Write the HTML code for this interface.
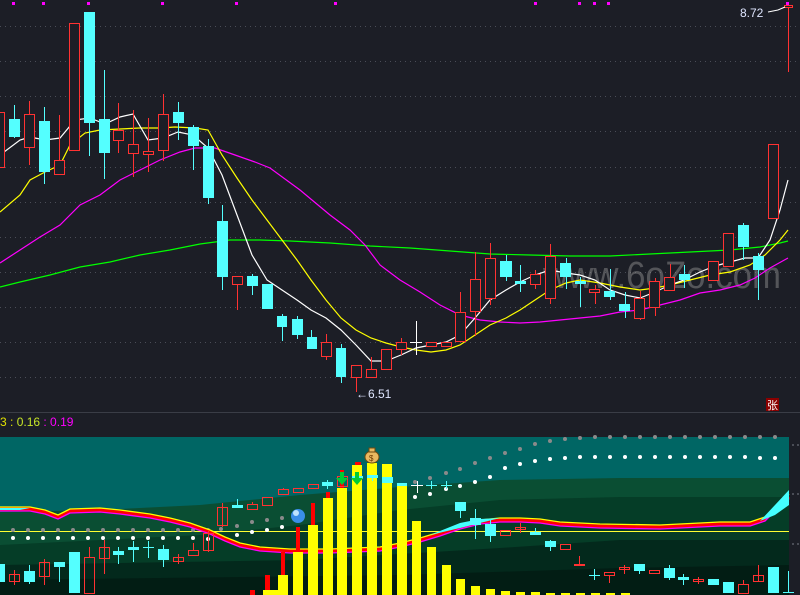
<!DOCTYPE html>
<html><head><meta charset="utf-8"><style>
html,body{margin:0;padding:0;background:#1c1e26;width:800px;height:595px;overflow:hidden}
svg{display:block}
text{font-family:"Liberation Sans","Noto Sans CJK SC",sans-serif}
</style></head><body>
<svg width="800" height="595" viewBox="0 0 800 595" xmlns="http://www.w3.org/2000/svg">
<rect width="800" height="595" fill="#1c1e26"/>
<!-- grid -->
<g stroke="#4a4d57" stroke-width="1" stroke-dasharray="1 4">
<line x1="0" y1="26.5" x2="800" y2="26.5"/><line x1="0" y1="61.5" x2="800" y2="61.5"/>
<line x1="0" y1="96.5" x2="800" y2="96.5"/><line x1="0" y1="131.5" x2="800" y2="131.5"/>
<line x1="0" y1="167.5" x2="800" y2="167.5"/><line x1="0" y1="202.5" x2="800" y2="202.5"/>
<line x1="0" y1="237.5" x2="800" y2="237.5"/><line x1="0" y1="272.5" x2="800" y2="272.5"/>
<line x1="0" y1="307.5" x2="800" y2="307.5"/><line x1="0" y1="342.5" x2="800" y2="342.5"/>
<line x1="0" y1="377.5" x2="800" y2="377.5"/>
</g>
<g fill="#ff00ff">
<rect x="12" y="2" width="3" height="3"/><rect x="42" y="2" width="3" height="3"/><rect x="87" y="2" width="3" height="3"/><rect x="161" y="2" width="3" height="3"/><rect x="235" y="2" width="3" height="3"/><rect x="334" y="2" width="3" height="3"/><rect x="534" y="2" width="3" height="3"/><rect x="578" y="2" width="3" height="3"/><rect x="593" y="2" width="3" height="3"/><rect x="607" y="2" width="3" height="3"/><rect x="786" y="2" width="3" height="3"/>
</g>
<!-- watermark -->
<text x="543" y="288" font-size="38" fill="#9a9a9a" fill-opacity="0.45" textLength="238" lengthAdjust="spacingAndGlyphs">www.6oZo.com</text>
<!-- MA lines -->
<g fill="none" stroke-width="1.2">
<polyline stroke="#00ff00" points="0,287 20,282 50,275 80,267 110,262 140,255 170,250 200,244 230,240 260,240 290,241 330,243 370,246 410,248 450,251 490,254 530,255 570,256 610,256 650,254 690,252 730,250 760,247 780,243 788,241"/>
<polyline stroke="#ff00ff" points="0,263 20,250 40,237 60,225 80,205 100,195 120,180 140,170 160,160 180,152 195,148 215,148 235,155 255,162 270,168 300,190 330,215 350,230 365,245 380,265 400,280 420,292 440,305 460,315 480,320 500,322 520,323 540,322 560,320 580,318 600,316 620,312 640,310 660,305 680,300 700,293 720,290 740,285 755,278 770,268 788,258"/>
<polyline stroke="#ffff00" points="0,212 20,195 30,180 45,172 60,165 70,145 85,133 100,130 120,129 140,128 160,128 175,127 195,128 208,130 222,155 237,178 252,200 267,220 282,240 297,260 311,280 326,300 341,318 356,330 371,338 386,343 401,347 416,350 431,352 446,350 460,345 475,335 490,325 506,318 520,310 535,300 550,290 566,283 580,280 600,283 620,287 640,290 655,288 670,285 690,280 710,275 730,272 750,265 765,255 780,240 788,230"/>
<polyline stroke="#ffffff" points="0,155 20,140 30,137 45,140 60,138 75,120 90,118 105,124 120,117 133,114 148,140 163,138 178,132 193,135 208,148 222,175 237,215 252,255 267,280 282,290 297,300 311,310 326,318 341,330 356,345 371,361 386,361 401,355 416,348 431,345 446,342 460,335 475,318 490,300 506,290 520,282 535,275 550,270 566,273 580,275 595,280 610,290 625,295 640,298 655,292 670,285 684,280 700,272 715,266 730,262 745,258 758,258 770,240 780,210 788,180"/>
</g>
<!-- upper candles -->
<g stroke="#ff3232" fill="#1c1e26" stroke-width="1">
<rect x="-2.5" y="112.5" width="7" height="55"/>
<line x1="29.5" y1="101" x2="29.5" y2="165"/><rect x="24.5" y="114.5" width="10" height="33"/>
<line x1="59.5" y1="115" x2="59.5" y2="174"/><rect x="54.5" y="160.5" width="10" height="14"/>
<rect x="69.5" y="23.5" width="10" height="127"/>
<line x1="118.5" y1="103" x2="118.5" y2="153"/><rect x="113.5" y="130.5" width="10" height="10"/>
<line x1="133.5" y1="110" x2="133.5" y2="177"/><rect x="128.5" y="144.5" width="10" height="9"/>
<line x1="148.5" y1="118" x2="148.5" y2="172"/><rect x="143.5" y="151.5" width="10" height="3"/>
<line x1="163.5" y1="94" x2="163.5" y2="161"/><rect x="158.5" y="114.5" width="10" height="36"/>
<line x1="237.5" y1="276" x2="237.5" y2="310"/><rect x="232.5" y="276.5" width="10" height="8"/>
<line x1="326.5" y1="334" x2="326.5" y2="360"/><rect x="321.5" y="342.5" width="10" height="14"/>
<line x1="356.5" y1="365" x2="356.5" y2="392"/><rect x="351.5" y="365.5" width="10" height="12"/>
<line x1="371.5" y1="357" x2="371.5" y2="370"/><rect x="366.5" y="369.5" width="10" height="8"/>
<rect x="381.5" y="349.5" width="10" height="20"/>
<line x1="401.5" y1="338" x2="401.5" y2="355"/><rect x="396.5" y="342.5" width="10" height="7"/>
<rect x="426.5" y="342.5" width="10" height="4"/><rect x="441.5" y="342.5" width="10" height="4"/>
<line x1="460.5" y1="292" x2="460.5" y2="341"/><rect x="455.5" y="312.5" width="10" height="29"/>
<line x1="475.5" y1="252" x2="475.5" y2="336"/><rect x="470.5" y="279.5" width="10" height="32"/>
<line x1="490.5" y1="243" x2="490.5" y2="305"/><rect x="485.5" y="258.5" width="10" height="40"/>
<line x1="535.5" y1="270" x2="535.5" y2="289"/><rect x="530.5" y="274.5" width="10" height="10"/>
<line x1="550.5" y1="244" x2="550.5" y2="304"/><rect x="545.5" y="256.5" width="10" height="42"/>
<line x1="595.5" y1="285" x2="595.5" y2="304"/><rect x="589.5" y="289.5" width="10" height="3"/>
<line x1="640.5" y1="291" x2="640.5" y2="320"/><rect x="634.5" y="298.5" width="10" height="20"/>
<line x1="655.5" y1="278" x2="655.5" y2="316"/><rect x="649.5" y="281.5" width="10" height="26"/>
<line x1="670.5" y1="264" x2="670.5" y2="291"/><rect x="664.5" y="277.5" width="10" height="13"/>
<rect x="708.5" y="261.5" width="10" height="19"/>
<rect x="723.5" y="233.5" width="10" height="33"/>
<rect x="768.5" y="144.5" width="10" height="74"/>
<line x1="788.5" y1="5" x2="788.5" y2="72"/><rect x="784.5" y="5.5" width="8" height="2"/>
</g>
<g fill="#54ffff" stroke="#54ffff" stroke-width="1">
<line x1="14.5" y1="105" x2="14.5" y2="138"/><rect x="9" y="119" width="11" height="18" stroke="none"/>
<line x1="44.5" y1="107" x2="44.5" y2="184"/><rect x="39" y="121" width="11" height="51" stroke="none"/>
<line x1="89.5" y1="12" x2="89.5" y2="156"/><rect x="84" y="12" width="11" height="111" stroke="none"/>
<line x1="104.5" y1="70" x2="104.5" y2="179"/><rect x="99" y="119" width="11" height="34" stroke="none"/>
<line x1="178.5" y1="102" x2="178.5" y2="140"/><rect x="173" y="112" width="11" height="11" stroke="none"/>
<line x1="193.5" y1="125" x2="193.5" y2="170"/><rect x="188" y="127" width="11" height="19" stroke="none"/>
<line x1="208.5" y1="139" x2="208.5" y2="204"/><rect x="203" y="146" width="11" height="52" stroke="none"/>
<line x1="222.5" y1="205" x2="222.5" y2="290"/><rect x="217" y="221" width="11" height="56" stroke="none"/>
<line x1="252.5" y1="274" x2="252.5" y2="295"/><rect x="247" y="276" width="11" height="10" stroke="none"/>
<rect x="262" y="284" width="11" height="25" stroke="none"/>
<line x1="282.5" y1="314" x2="282.5" y2="341"/><rect x="277" y="316" width="10" height="11" stroke="none"/>
<line x1="297.5" y1="316" x2="297.5" y2="339"/><rect x="292" y="319" width="11" height="16" stroke="none"/>
<line x1="311.5" y1="330" x2="311.5" y2="349"/><rect x="307" y="337" width="10" height="12" stroke="none"/>
<line x1="341.5" y1="344" x2="341.5" y2="383"/><rect x="336" y="348" width="10" height="29" stroke="none"/>
<line x1="506.5" y1="255" x2="506.5" y2="281"/><rect x="500" y="261" width="12" height="16" stroke="none"/>
<line x1="520.5" y1="265" x2="520.5" y2="292"/><rect x="515" y="281" width="11" height="3" stroke="none"/>
<line x1="566.5" y1="258" x2="566.5" y2="289"/><rect x="560" y="263" width="11" height="14" stroke="none"/>
<line x1="580.5" y1="277" x2="580.5" y2="307"/><rect x="575" y="281" width="11" height="3" stroke="none"/>
<line x1="610.5" y1="269" x2="610.5" y2="300"/><rect x="604" y="291" width="11" height="6" stroke="none"/>
<line x1="625.5" y1="292" x2="625.5" y2="318"/><rect x="619" y="304" width="11" height="7" stroke="none"/>
<line x1="684.5" y1="265" x2="684.5" y2="288"/><rect x="679" y="274" width="11" height="6" stroke="none"/>
<line x1="743.5" y1="223" x2="743.5" y2="260"/><rect x="738" y="225" width="11" height="22" stroke="none"/>
<line x1="758.5" y1="253" x2="758.5" y2="300"/><rect x="753" y="256" width="11" height="14" stroke="none"/>
</g>
<g stroke="#ffffff"><line x1="410" y1="342.5" x2="422" y2="342.5"/><line x1="416.5" y1="321" x2="416.5" y2="355"/></g>
<!-- labels -->
<text x="356" y="398" font-size="12" fill="#dfe6ff">←6.51</text>
<text x="740" y="17" font-size="12" fill="#dfe6ff">8.72</text>
<polyline points="768,12 778,10 785,7" fill="none" stroke="#fff" stroke-width="1"/>
<rect x="766" y="398" width="13" height="13" fill="#8b0000"/>
<text x="767" y="409" font-size="11" fill="#fff">张</text>
<line x1="0" y1="412.5" x2="800" y2="412.5" stroke="#3a3d46"/>
<text x="0" y="426" font-size="12"><tspan fill="#e0e000">3 : </tspan><tspan fill="#c8e628">0.16 </tspan><tspan fill="#ff00ff">: 0.19</tspan></text>
<!-- lower panel -->
<rect x="0" y="437" width="789" height="158" fill="#006664"/>
<polygon fill="#0a4e33" points="0,512 100,510 200,505 300,495 400,487 500,480 620,478 789,478 789,595 0,595"/>
<polygon fill="#053d27" points="0,545 200,535 300,525 400,510 500,500 620,497 789,497 789,595 0,595"/>
<polygon fill="#03291c" points="0,565 300,560 500,548 620,540 789,540 789,595 0,595"/>
<polygon fill="#021d14" points="0,580 400,575 620,568 789,565 789,595 0,595"/>
<rect x="789" y="437" width="11" height="158" fill="#1c1e26"/>
<g fill="#5a5d66"><circle cx="793" cy="445" r="1"/><circle cx="798" cy="445" r="1"/><circle cx="793" cy="494" r="1"/><circle cx="798" cy="494" r="1"/><circle cx="793" cy="544" r="1"/><circle cx="798" cy="544" r="1"/></g>
<line x1="0" y1="531.5" x2="789" y2="531.5" stroke="#ffff33" stroke-width="1"/>
<!-- dots -->
<g fill="#8a8a8a">
<circle cx="13" cy="530" r="2"/><circle cx="28" cy="530" r="2"/><circle cx="43" cy="530" r="2"/><circle cx="58" cy="530" r="2"/><circle cx="73" cy="530" r="2"/><circle cx="88" cy="530" r="2"/><circle cx="103" cy="530" r="2"/><circle cx="118" cy="530" r="2"/><circle cx="133" cy="530" r="2"/><circle cx="148" cy="530" r="2"/><circle cx="163" cy="530" r="2"/><circle cx="178" cy="530" r="2"/><circle cx="193" cy="530" r="2"/><circle cx="208" cy="530" r="2"/><circle cx="221" cy="529" r="2"/><circle cx="237" cy="526" r="2"/><circle cx="252" cy="522" r="2"/><circle cx="267" cy="520" r="2"/><circle cx="282" cy="518" r="2"/>
<circle cx="415" cy="482" r="2"/><circle cx="430" cy="478" r="2"/><circle cx="446" cy="473" r="2"/><circle cx="460" cy="469" r="2"/><circle cx="475" cy="463" r="2"/><circle cx="490" cy="458" r="2"/><circle cx="505" cy="453" r="2"/><circle cx="520" cy="449" r="2"/><circle cx="535" cy="444" r="2"/><circle cx="550" cy="441" r="2"/><circle cx="565" cy="439" r="2"/><circle cx="580" cy="438" r="2"/><circle cx="595" cy="437" r="2"/><circle cx="610" cy="437" r="2"/><circle cx="625" cy="437" r="2"/><circle cx="640" cy="437" r="2"/><circle cx="655" cy="437" r="2"/><circle cx="670" cy="437" r="2"/><circle cx="685" cy="437" r="2"/><circle cx="700" cy="437" r="2"/><circle cx="715" cy="437" r="2"/><circle cx="730" cy="437" r="2"/><circle cx="745" cy="437" r="2"/><circle cx="760" cy="437" r="2"/><circle cx="775" cy="437" r="2"/>
</g>
<g fill="#ffffff">
<circle cx="13" cy="538" r="2"/><circle cx="28" cy="538" r="2"/><circle cx="43" cy="538" r="2"/><circle cx="58" cy="538" r="2"/><circle cx="73" cy="538" r="2"/><circle cx="88" cy="538" r="2"/><circle cx="103" cy="538" r="2"/><circle cx="118" cy="538" r="2"/><circle cx="133" cy="538" r="2"/><circle cx="148" cy="538" r="2"/><circle cx="163" cy="538" r="2"/><circle cx="178" cy="538" r="2"/><circle cx="193" cy="538" r="2"/><circle cx="208" cy="539" r="2"/><circle cx="237" cy="535" r="2"/><circle cx="252" cy="532" r="2"/><circle cx="267" cy="530" r="2"/><circle cx="282" cy="527" r="2"/>
<circle cx="415" cy="497" r="2"/><circle cx="430" cy="494" r="2"/><circle cx="446" cy="489" r="2"/><circle cx="460" cy="486" r="2"/><circle cx="475" cy="482" r="2"/><circle cx="490" cy="477" r="2"/><circle cx="505" cy="468" r="2"/><circle cx="520" cy="464" r="2"/><circle cx="535" cy="461" r="2"/><circle cx="550" cy="459" r="2"/><circle cx="565" cy="458" r="2"/><circle cx="580" cy="457" r="2"/><circle cx="595" cy="457" r="2"/><circle cx="610" cy="457" r="2"/><circle cx="625" cy="457" r="2"/><circle cx="640" cy="457" r="2"/><circle cx="655" cy="457" r="2"/><circle cx="670" cy="457" r="2"/><circle cx="685" cy="457" r="2"/><circle cx="700" cy="457" r="2"/><circle cx="715" cy="457" r="2"/><circle cx="730" cy="457" r="2"/><circle cx="745" cy="457" r="2"/><circle cx="760" cy="458" r="2"/><circle cx="775" cy="458" r="2"/>
</g>
<!-- ribbon -->
<g fill="none" stroke-linejoin="round">
<polyline stroke="#ff0000" stroke-width="3" points="0,509 30,509 45,512 58,517 70,511 100,510 120,512 150,516 170,520 190,525 210,532 225,539 240,545 260,549 290,551 330,551 380,549 400,545 420,540 440,534 460,527 480,522 500,520 520,520 540,521 560,524 600,526 660,527 700,525 720,524 750,524 765,519 775,509 789,497"/>
<polyline stroke="#ffff00" stroke-width="1.3" points="0,507 30,507 45,510 58,515 70,509 100,508 120,510 150,514 170,518 190,523 210,530 225,537 240,543 260,547 290,549 330,549 380,547 400,543 420,538 440,532 460,525 480,520 500,518 520,518 540,519 560,522 600,524 660,525 700,523 720,522 750,522 765,517 775,507 789,494"/>
<polyline stroke="#ff00ff" stroke-width="1.3" points="0,511 30,511 45,514 58,519 70,513 100,512 120,514 150,518 170,522 190,527 210,534 225,541 240,547 260,551 290,553 330,553 380,551 400,547 420,542 440,536 460,529 480,524 500,522 520,522 540,523 560,526 600,528 660,529 700,527 720,526 750,526 765,521 775,511 789,499"/>
</g>
<polygon fill="#44ffff" points="430,535 460,523 480,519 500,518 480,523 460,528"/>
<polygon fill="#44ffff" points="0,508 30,508 20,510 0,510"/>
<polygon fill="#44ffff" points="760,521 775,505 789,490 789,505 775,515"/>
<!-- volume bars -->
<g fill="#ff0000">
<rect x="250" y="590" width="5" height="5"/><rect x="265" y="575" width="5" height="20"/><rect x="281" y="552" width="4" height="24"/><rect x="296" y="527" width="4" height="26"/><rect x="311" y="503" width="4" height="23"/><rect x="326" y="492" width="4" height="8"/><rect x="340" y="470" width="4" height="19"/><rect x="355" y="462" width="6" height="4"/>
</g>
<g fill="#ffff00">
<rect x="263" y="590" width="15" height="5"/><rect x="278" y="575" width="10" height="20"/><rect x="293" y="552" width="10" height="43"/><rect x="308" y="525" width="10" height="70"/><rect x="323" y="498" width="10" height="97"/><rect x="337" y="488" width="10" height="107"/><rect x="352" y="465" width="10" height="130"/><rect x="367" y="463" width="10" height="132"/><rect x="382" y="464" width="10" height="131"/><rect x="397" y="484" width="10" height="111"/><rect x="412" y="521" width="9" height="74"/><rect x="427" y="547" width="9" height="48"/><rect x="442" y="565" width="9" height="30"/><rect x="456" y="579" width="9" height="16"/><rect x="471" y="586" width="9" height="9"/><rect x="486" y="589" width="9" height="6"/><rect x="501" y="591" width="9" height="4"/><rect x="516" y="592" width="9" height="3"/><rect x="531" y="592" width="9" height="3"/><rect x="546" y="593" width="9" height="2"/><rect x="561" y="593" width="9" height="2"/><rect x="576" y="593" width="9" height="2"/><rect x="591" y="593" width="9" height="2"/><rect x="606" y="593" width="9" height="2"/><rect x="621" y="593" width="9" height="2"/>
</g>
<!-- lower candles red -->
<g stroke="#ff3232" fill="none">
<line x1="14.5" y1="570" x2="14.5" y2="585"/><rect x="9.5" y="574.5" width="10" height="7"/>
<line x1="44.5" y1="559" x2="44.5" y2="585"/><rect x="39.5" y="562.5" width="10" height="14"/>
<line x1="89.5" y1="547" x2="89.5" y2="557"/><rect x="84.5" y="557.5" width="10" height="36"/>
<line x1="104.5" y1="540" x2="104.5" y2="574"/><rect x="99.5" y="547.5" width="10" height="11"/>
<line x1="178.5" y1="554" x2="178.5" y2="564"/><rect x="173.5" y="557.5" width="10" height="4"/>
<line x1="193.5" y1="543" x2="193.5" y2="550"/><rect x="188.5" y="550.5" width="10" height="5"/>
<line x1="208.5" y1="531" x2="208.5" y2="552"/><rect x="203.5" y="533.5" width="10" height="17"/>
<line x1="222.5" y1="503" x2="222.5" y2="527"/><rect x="217.5" y="507.5" width="10" height="18"/>
<line x1="252.5" y1="502" x2="252.5" y2="505"/><rect x="247.5" y="504.5" width="10" height="5"/>
<rect x="262.5" y="497.5" width="10" height="8"/>
<line x1="283.5" y1="488" x2="283.5" y2="490"/><rect x="278.5" y="489.5" width="10" height="5"/>
<rect x="293.5" y="488.5" width="10" height="4"/>
<rect x="308.5" y="484.5" width="10" height="4"/>
<rect x="337.5" y="476.5" width="10" height="10"/>
<rect x="500.5" y="530.5" width="10" height="5"/>
<line x1="520.5" y1="523" x2="520.5" y2="533"/><rect x="515.5" y="527.5" width="10" height="2"/>
<rect x="560.5" y="544.5" width="10" height="5"/>
<line x1="579.5" y1="556" x2="579.5" y2="565"/><line x1="574" y1="565" x2="585" y2="565" stroke-width="2"/>
<line x1="609.5" y1="575" x2="609.5" y2="583"/><rect x="604.5" y="572.5" width="10" height="3"/>
<line x1="624.5" y1="565" x2="624.5" y2="574"/><rect x="619.5" y="567.5" width="10" height="2"/>
<rect x="649.5" y="570.5" width="10" height="3"/>
<line x1="698.5" y1="577" x2="698.5" y2="584"/><rect x="693.5" y="579.5" width="10" height="2"/>
<line x1="743.5" y1="580" x2="743.5" y2="584"/><rect x="738.5" y="584.5" width="10" height="9"/>
<line x1="758.5" y1="565" x2="758.5" y2="582"/><rect x="753.5" y="575.5" width="10" height="6"/>
</g>
<g fill="#54ffff" stroke="#54ffff">
<rect x="0" y="564" width="5" height="18" stroke="none"/>
<line x1="29.5" y1="565" x2="29.5" y2="584"/><rect x="24" y="571" width="11" height="11" stroke="none"/>
<line x1="59.5" y1="562" x2="59.5" y2="582"/><rect x="54" y="562" width="11" height="5" stroke="none"/>
<rect x="69" y="552" width="11" height="41" stroke="none"/>
<line x1="118.5" y1="547" x2="118.5" y2="564"/><rect x="113" y="551" width="11" height="4" stroke="none"/>
<line x1="133.5" y1="541" x2="133.5" y2="562"/><rect x="128" y="547" width="11" height="3" stroke="none"/>
<line x1="148.5" y1="541" x2="148.5" y2="558"/><line x1="143" y1="547.5" x2="154" y2="547.5"/>
<line x1="163.5" y1="545" x2="163.5" y2="567"/><rect x="158" y="549" width="11" height="11" stroke="none"/>
<line x1="237.5" y1="499" x2="237.5" y2="507"/><rect x="232" y="505" width="11" height="3" stroke="none"/>
<line x1="327.5" y1="480" x2="327.5" y2="489"/><rect x="322" y="482" width="11" height="4" stroke="none"/>
<rect x="352" y="476" width="11" height="3" stroke="none"/>
<line x1="372.5" y1="475" x2="372.5" y2="481"/><rect x="367" y="475" width="11" height="3" stroke="none"/>
<rect x="382" y="477" width="11" height="6" stroke="none"/>
<rect x="397" y="483" width="10" height="3" stroke="none"/>
<line x1="431.5" y1="481" x2="431.5" y2="489"/><line x1="426" y1="485.5" x2="437" y2="485.5"/>
<line x1="446.5" y1="481" x2="446.5" y2="489"/><line x1="441" y1="485.5" x2="452" y2="485.5"/>
<line x1="460.5" y1="502" x2="460.5" y2="518"/><rect x="455" y="502" width="11" height="9" stroke="none"/>
<line x1="475.5" y1="509" x2="475.5" y2="539"/><rect x="470" y="518" width="11" height="7" stroke="none"/>
<line x1="490.5" y1="520" x2="490.5" y2="542"/><rect x="485" y="524" width="11" height="12" stroke="none"/>
<line x1="535.5" y1="528" x2="535.5" y2="535"/><rect x="530" y="532" width="11" height="3" stroke="none"/>
<line x1="550.5" y1="540" x2="550.5" y2="551"/><rect x="545" y="541" width="11" height="6" stroke="none"/>
<line x1="594.5" y1="569" x2="594.5" y2="580"/><line x1="589" y1="575.5" x2="600" y2="575.5"/>
<rect x="634" y="564" width="11" height="7" stroke="none"/><line x1="639.5" y1="571" x2="639.5" y2="574"/>
<line x1="669.5" y1="565" x2="669.5" y2="580"/><rect x="664" y="568" width="11" height="10" stroke="none"/>
<line x1="683.5" y1="574" x2="683.5" y2="585"/><rect x="678" y="577" width="11" height="3" stroke="none"/>
<rect x="708" y="579" width="11" height="6" stroke="none"/>
<rect x="723" y="582" width="11" height="11" stroke="none"/>
<rect x="768" y="567" width="11" height="26" stroke="none"/>
<line x1="788.5" y1="571" x2="788.5" y2="593"/><line x1="783" y1="592.5" x2="794" y2="592.5"/>
</g>
<g stroke="#fff"><line x1="417.5" y1="481" x2="417.5" y2="493"/><line x1="411" y1="485.5" x2="423" y2="485.5"/></g>
<!-- icons -->
<circle cx="298" cy="516" r="7" fill="#3a8ee8"/><circle cx="296" cy="513" r="3" fill="#bfe4ff"/>
<g fill="#00cc33"><rect x="340" y="472" width="4" height="7"/><polygon points="336,478 348,478 342,485"/><rect x="355" y="472" width="4" height="7"/><polygon points="351,478 363,478 357,485"/></g>
<ellipse cx="372" cy="457" rx="7" ry="6" fill="#e8b860" stroke="#6b4a10"/><rect x="369" y="448" width="6" height="4" fill="#e8b860" stroke="#6b4a10"/>
<text x="369" y="461" font-size="8" fill="#6b3a00">$</text>
</svg>
</body></html>
